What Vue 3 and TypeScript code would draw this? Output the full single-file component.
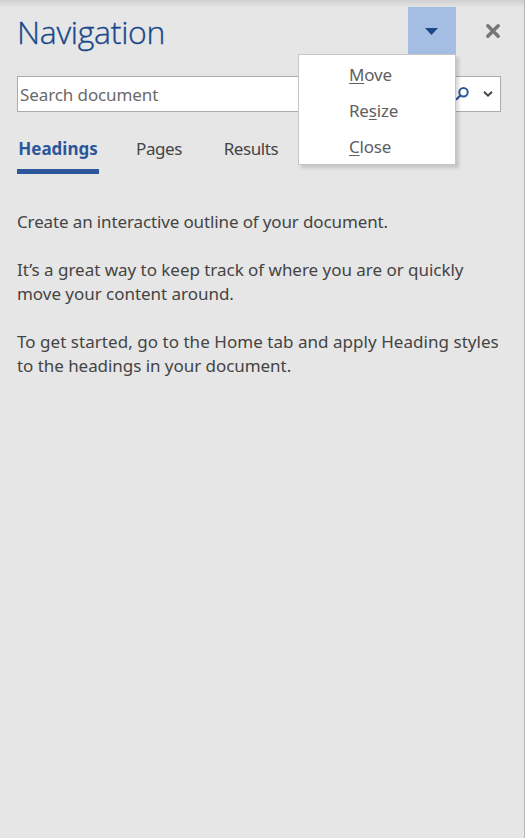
<script setup lang="ts">
import { ref } from 'vue'

interface MenuItem {
  before: string
  key: string
  after: string
}

const menuItems: MenuItem[] = [
  { before: '', key: 'M', after: 'ove' },
  { before: 'Re', key: 's', after: 'ize' },
  { before: '', key: 'C', after: 'lose' },
]
const tabs = ['Headings', 'Pages', 'Results']
const activeTab = ref('Headings')
const menuOpen = ref(true)
</script>

<template>
  <aside class="pane">
    <header class="header">
      <h1 class="title">Navigation</h1>
      <div class="menu-anchor">
        <button class="menu-button" aria-label="Task pane options" @click="menuOpen = !menuOpen">
          <svg width="13" height="7" viewBox="0 0 13 7"><path d="M0 0H13L6.5 7Z" fill="#19478a" /></svg>
        </button>
        <ul v-if="menuOpen" class="menu">
          <li v-for="item in menuItems" :key="item.key" class="menu-item">
            {{ item.before }}<span class="access-key">{{ item.key }}</span>{{ item.after }}
          </li>
        </ul>
      </div>
      <button class="close-button" aria-label="Close pane">
        <svg width="16" height="16" viewBox="0 0 16 16"><path d="M2.8 2.8L13.2 13.2M13.2 2.8L2.8 13.2" stroke="#777" stroke-width="3.5" stroke-linecap="round" fill="none" /></svg>
      </button>
    </header>

    <div class="search">
      <span class="placeholder">Search document</span>
      <svg class="magnifier" width="14" height="14" viewBox="0 0 14 14">
        <circle cx="8.5" cy="5.3" r="4.2" fill="none" stroke="#2b579a" stroke-width="2" />
        <path d="M5.6 8.3L1 12.8" stroke="#2b579a" stroke-width="2.2" />
      </svg>
      <svg class="chevron" width="10" height="6" viewBox="0 0 10 6">
        <path d="M1 .8L5 4.6L9 .8" fill="none" stroke="#444" stroke-width="1.9" />
      </svg>
    </div>

    <nav class="tabs">
      <button
        v-for="tab in tabs"
        :key="tab"
        class="tab"
        :class="[tab.toLowerCase(), { active: tab === activeTab }]"
        @click="activeTab = tab"
      >{{ tab }}</button>
    </nav>

    <div class="content">
      <p class="intro">Create an interactive outline of your document.</p>
      <p class="benefit">It’s a great way to keep track of where you are or quickly<br>move your content around.</p>
      <p class="hint">To get started, go to the Home tab and apply Heading styles<br><span class="hint-end">to the headings in your document.</span></p>
    </div>
  </aside>
</template>

<style>
body {
  background: #e6e6e6;
}
</style>

<style scoped>
.pane {
  box-sizing: border-box;
  height: 838px;
  padding: 7px 23px 0 17px;
  border-right: 1px solid #b5b5b5;
  background: linear-gradient(#d0d0d0, #e6e6e6 8px);
  font-family: "Noto Sans", "Open Sans", sans-serif;
  font-size: 17px;
  color: #444;
  white-space: nowrap;
}
button {
  padding: 0;
  border: 0;
  background: none;
  color: inherit;
  font: inherit;
}
.header {
  display: flex;
  height: 47px;
}
.title {
  flex: 1;
  margin: 0;
  font-family: "Open Sans", sans-serif;
  font-size: 32px;
  font-weight: 300;
  line-height: 50px;
  letter-spacing: -.3px;
  color: #19478a;
  -webkit-text-stroke: .35px #19478a;
}
.menu-anchor {
  position: relative;
  width: 48px;
}
.menu-button {
  display: flex;
  box-sizing: border-box;
  width: 48px;
  height: 47px;
  padding: 1px 1px 0 0;
  align-items: center;
  justify-content: center;
  background: #a3bde3;
}
.close-button {
  display: flex;
  width: 45px;
  height: 47px;
  align-items: center;
  justify-content: flex-end;
}
.menu {
  position: absolute;
  z-index: 1;
  top: 47px;
  right: 0;
  box-sizing: border-box;
  width: 158px;
  height: 111px;
  margin: 0;
  padding: 2px 0 0 50px;
  border: 1px solid #c6c6c6;
  background: #fff;
  box-shadow: 3px 3px 3px rgba(0, 0, 0, .14);
  list-style: none;
  color: #606060;
  letter-spacing: -.2px;
}
.menu-item {
  height: 36px;
  line-height: 36px;
}
.access-key {
  text-decoration: underline;
  text-decoration-thickness: 1px;
  text-underline-offset: 2px;
}
.search {
  display: flex;
  box-sizing: border-box;
  height: 36px;
  margin-top: 22px;
  padding: 0 7px 0 2px;
  align-items: center;
  border: 1px solid #ababab;
  background: #fff;
}
.placeholder {
  flex: 1;
  letter-spacing: -.1px;
  color: #6a6a6a;
}
.magnifier {
  margin-right: 14px;
}
.tabs {
  display: flex;
  height: 39px;
  margin-top: 23px;
}
.tab {
  box-sizing: border-box;
  width: 82px;
  height: 39px;
  padding-bottom: 7px;
  border-bottom: 5px solid transparent;
  line-height: 27px;
}
.tab.active {
  border-bottom-color: #2b579a;
  color: #2b579a;
  font-weight: 700;
}
.pages {
  width: 46px;
  margin-left: 37px;
  letter-spacing: -.4px;
}
.results {
  width: 56px;
  margin-left: 41px;
  letter-spacing: -.4px;
}
.content {
  padding-top: 36px;
  line-height: 24px;
}
.content p {
  margin: 0 0 24px;
}
.intro {
  letter-spacing: -.13px;
}
.benefit {
  letter-spacing: -.03px;
}
.hint {
  letter-spacing: .04px;
}
.hint-end {
  letter-spacing: -.05px;
}
</style>
